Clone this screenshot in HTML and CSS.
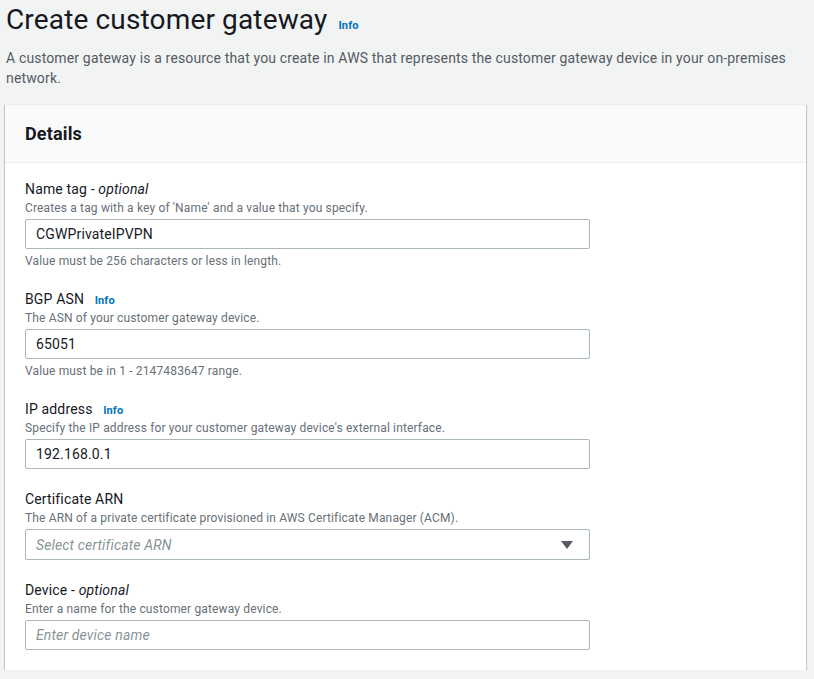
FILE: index.html
```html
<!DOCTYPE html>
<html lang="en">
<head>
    <meta charset="UTF-8">
    <meta name="viewport" content="width=device-width, initial-scale=1.0">
    <title>Create customer gateway</title>
    <link rel="stylesheet" href="styles.css">
</head>
<body>
    <div class="page">
        <div class="page-header">
            <h1>Create customer gateway</h1>
            <a class="info-link" href="#">Info</a>
        </div>
        <p class="page-desc">A customer gateway is a resource that you create in AWS that represents the customer gateway device in your on-premises network.</p>

        <div class="card">
            <div class="card-header">
                <h2>Details</h2>
            </div>
            <div class="card-body">
                <div class="field">
                    <label for="nameTag">Name tag - <i>optional</i></label>
                    <div class="field-desc">Creates a tag with a key of 'Name' and a value that you specify.</div>
                    <input type="text" id="nameTag" value="CGWPrivateIPVPN">
                    <div class="field-hint">Value must be 256 characters or less in length.</div>
                </div>

                <div class="field">
                    <label for="bgpAsn">BGP ASN <a class="info-link" href="#">Info</a></label>
                    <div class="field-desc">The ASN of your customer gateway device.</div>
                    <input type="text" id="bgpAsn" value="65051">
                    <div class="field-hint">Value must be in 1 - 2147483647 range.</div>
                </div>

                <div class="field">
                    <label for="ipAddress">IP address <a class="info-link" href="#">Info</a></label>
                    <div class="field-desc">Specify the IP address for your customer gateway device's external interface.</div>
                    <input type="text" id="ipAddress" value="192.168.0.1">
                </div>

                <div class="field">
                    <label>Certificate ARN</label>
                    <div class="field-desc">The ARN of a private certificate provisioned in AWS Certificate Manager (ACM).</div>
                    <div class="select">
                        <span class="placeholder">Select certificate ARN</span>
                        <span class="caret"></span>
                    </div>
                </div>

                <div class="field">
                    <label for="device">Device - <i>optional</i></label>
                    <div class="field-desc">Enter a name for the customer gateway device.</div>
                    <input type="text" id="device" placeholder="Enter device name">
                </div>
            </div>
        </div>
    </div>
</body>
</html>
```

FILE: styles.css
```css
body {
    margin: 0;
    background-color: #f2f3f3;
    font-family: Roboto, "Noto Sans", sans-serif;
    letter-spacing: 0.15px;
    color: #16191f;
}
.page {
    padding: 0 8px 0 6px;
}
.page-header {
    display: flex;
    align-items: baseline;
    gap: 11px;
    padding-top: 2px;
}
h1 {
    margin: 0;
    font-size: 28px;
    font-weight: 400;
    line-height: 36px;
}
.info-link {
    color: #0073bb;
    font-size: 11px;
    font-weight: 700;
    line-height: 1;
    text-decoration: none;
}
.page-desc {
    margin: 10px 0 16px;
    font-size: 14px;
    line-height: 20px;
    color: #545b64;
}
.card {
    margin-left: -1px;
    background: white;
    border-top: 1px solid #eaeded;
    box-shadow: 0 1px 1px 0 rgba(0, 28, 36, 0.3), 1px 1px 1px 0 rgba(0, 28, 36, 0.15), -1px 1px 1px 0 rgba(0, 28, 36, 0.15);
}
.card-header {
    background: #fafafa;
    border-bottom: 1px solid #eaeded;
    padding: 16px 20px;
}
h2 {
    margin: 0;
    font-size: 18px;
    font-weight: 700;
    line-height: 25px;
}
.card-body {
    padding: 15px 20px 20px;
    display: flex;
    flex-direction: column;
    gap: 19px;
}
.field label {
    display: block;
    height: 22px;
    font-size: 14px;
    line-height: 22px;
}
.field label .info-link {
    margin-left: 7px;
}
.field-desc {
    font-size: 12px;
    line-height: 16px;
    color: #687078;
}
.field input,
.select {
    display: flex;
    align-items: center;
    box-sizing: border-box;
    width: 565px;
    height: 30px;
    margin-top: 3px;
    padding: 0 10px;
    border: 1px solid #aab7b8;
    border-radius: 2px;
    background: white;
    font-family: inherit;
    font-size: 14px;
    letter-spacing: inherit;
    color: #16191f;
}
.field input::placeholder,
.placeholder {
    color: #879596;
    font-style: italic;
}
.select {
    justify-content: space-between;
    height: 31px;
}
.caret {
    width: 0;
    height: 0;
    margin-right: 6px;
    border-left: 6px solid transparent;
    border-right: 6px solid transparent;
    border-top: 8px solid #545b64;
}
.field-hint {
    font-size: 12px;
    line-height: 16px;
    padding-top: 4px;
    color: #687078;
}
```
